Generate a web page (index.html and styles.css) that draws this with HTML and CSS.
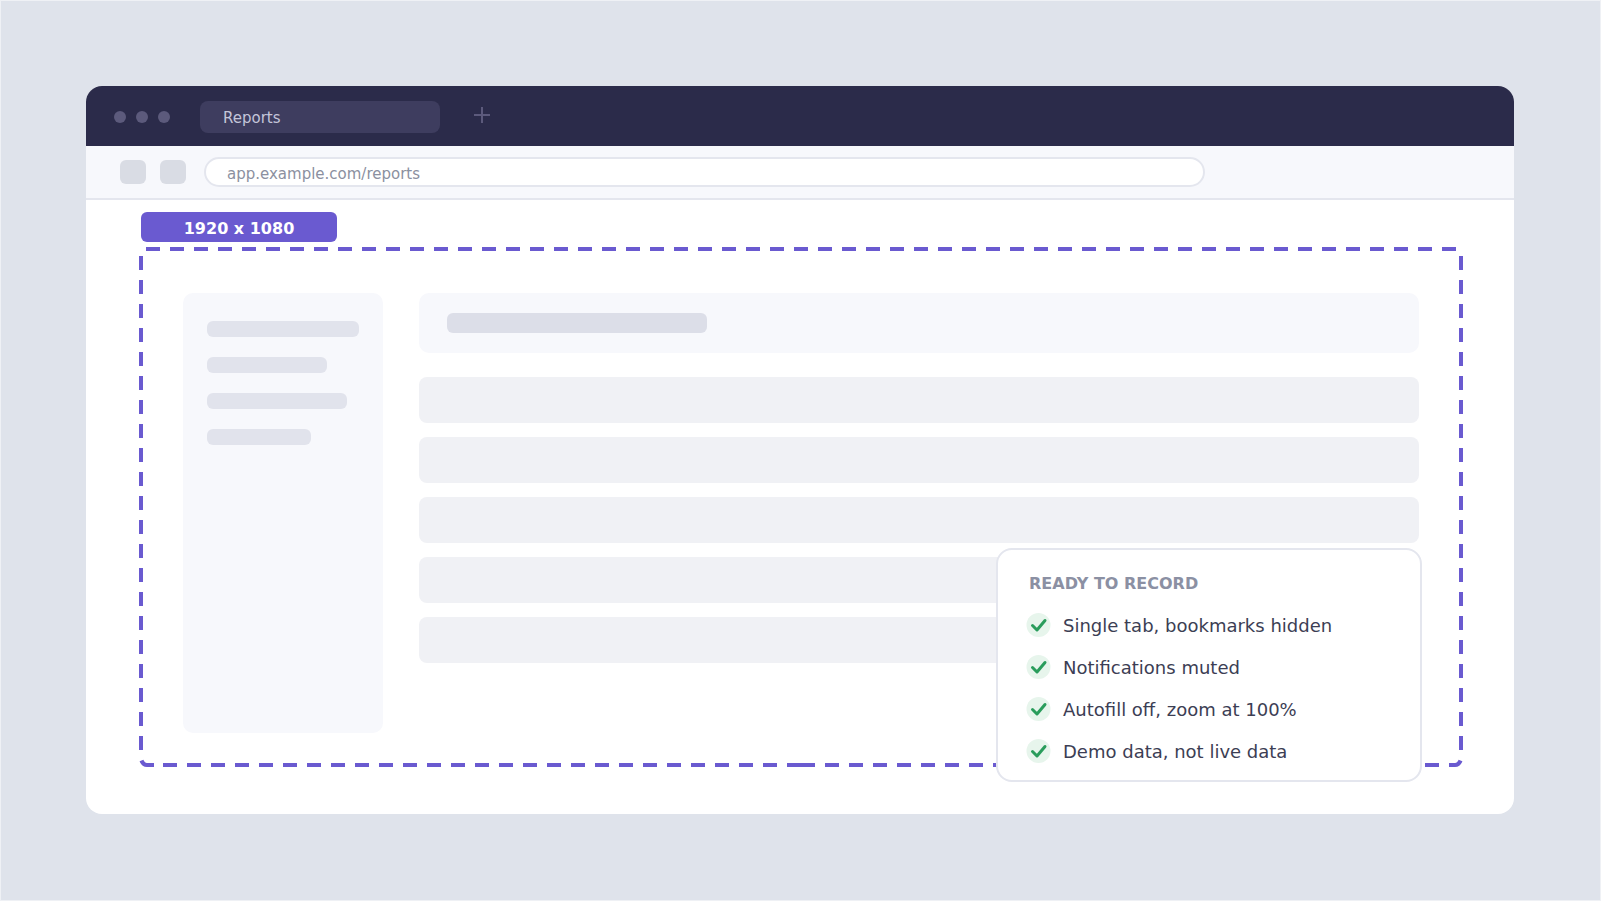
FILE: index.html
```html
<!DOCTYPE html>
<html lang="en">
<head>
<meta charset="utf-8">
<title>Reports</title>
<link rel="stylesheet" href="styles.css">
</head>
<body>
<main class="window">
  <header class="tabbar">
    <div class="dots"><i class="dot"></i><i class="dot"></i><i class="dot"></i></div>
    <button class="tab" type="button">Reports</button>
    <button class="new-tab" type="button" aria-label="New tab">
      <svg width="18" height="18" viewBox="0 0 18 18"><path d="M1 9H17M9 1V17" fill="none" stroke="currentColor" stroke-width="2"/></svg>
    </button>
  </header>
  <div class="toolbar">
    <button class="tool" type="button" aria-label="Back"></button>
    <button class="tool" type="button" aria-label="Forward"></button>
    <input class="address" type="text" aria-label="Address" value="app.example.com/reports">
  </div>
  <section class="page">
    <div class="badge">1920 x 1080</div>
    <div class="frame">
      <svg class="outline" aria-hidden="true">
        <g fill="none" stroke="currentColor" stroke-width="4" stroke-dasharray="14 10">
          <line x1="7" y1="2" x2="100%" y2="2"/>
          <line x1="2" y1="9" x2="2" y2="97%"/>
        </g>
        <svg x="100%" overflow="visible">
          <line x1="-2" y1="9" x2="-2" y2="97%" stroke="currentColor" stroke-width="4" stroke-dasharray="14 10"/>
        </svg>
        <svg y="100%" overflow="visible">
          <g fill="none" stroke="currentColor" stroke-width="4">
            <line x1="24" y1="-2" x2="50%" y2="-2" stroke-dasharray="14 10"/>
            <line x1="50%" y1="-2" x2="98.5%" y2="-2" stroke-dasharray="14 10"/>
            <path d="M2.500 -6.500Q4 -2 8 -2H15"/>
          </g>
        </svg>
        <svg x="100%" y="100%" overflow="visible">
          <path d="M-14 -2H-8Q-4 -2 -2.500 -6.500" fill="none" stroke="currentColor" stroke-width="4"/>
        </svg>
      </svg>
      <aside class="side">
        <div class="line line-a"></div>
        <div class="line line-b"></div>
        <div class="line line-c"></div>
        <div class="line line-d"></div>
      </aside>
      <div class="content">
        <div class="heading"><div class="heading-bar"></div></div>
        <div class="rows">
          <div class="row"></div>
          <div class="row"></div>
          <div class="row"></div>
          <div class="row"></div>
          <div class="row"></div>
        </div>
      </div>
      <section class="card">
        <h2 class="card-title">READY TO RECORD</h2>
        <ul class="checks">
          <li class="check"><svg class="tick" viewBox="0 0 24 24"><circle cx="12.500" cy="12" r="12"/><path d="M6.500 12.500L11 17L19 7.500"/></svg>Single tab, bookmarks hidden</li>
          <li class="check"><svg class="tick" viewBox="0 0 24 24"><circle cx="12.500" cy="12" r="12"/><path d="M6.500 12.500L11 17L19 7.500"/></svg>Notifications muted</li>
          <li class="check"><svg class="tick" viewBox="0 0 24 24"><circle cx="12.500" cy="12" r="12"/><path d="M6.500 12.500L11 17L19 7.500"/></svg>Autofill off, zoom at 100%</li>
          <li class="check"><svg class="tick" viewBox="0 0 24 24"><circle cx="12.500" cy="12" r="12"/><path d="M6.500 12.500L11 17L19 7.500"/></svg>Demo data, not live data</li>
        </ul>
      </section>
    </div>
  </section>
</main>
</body>
</html>
```
FILE: styles.css
```css
* { box-sizing: border-box; }
body {
  margin: 0;
  min-height: 100vh;
  display: flex;
  padding: 85px 86px 86px 85px;
  border: 1px solid #eff1f5;
  background: #dfe3eb;
  font-family: "DejaVu Sans", sans-serif;
}
button, input { font: inherit; border: 0; margin: 0; padding: 0; }
.window {
  flex: 1;
  display: flex;
  flex-direction: column;
  border-radius: 16px;
  overflow: hidden;
  background: #fff;
}
.tabbar {
  display: flex;
  align-items: center;
  height: 60px;
  padding: 1px 0 0 28px;
  background: #2b2b4a;
}
.dots { display: flex; gap: 10px; margin-right: 30px; }
.dot { width: 12px; height: 12px; border-radius: 50%; background: #5c5a7c; }
.tab {
  width: 240px;
  height: 32px;
  padding: 2px 0 0 23px;
  border-radius: 8px;
  background: #3e3d5f;
  color: #c4c5d9;
  font-size: 15px;
  line-height: 30px;
  text-align: left;
}
.new-tab {
  display: flex;
  height: 22px;
  margin-left: 33px;
  background: none;
  color: #5c5a7c;
}
.toolbar {
  display: flex;
  align-items: center;
  gap: 14px;
  height: 54px;
  padding: 0 309px 0 34px;
  border-bottom: 2px solid #e4e6ee;
  background: #f7f8fc;
}
.tool { width: 26px; height: 24px; border-radius: 6px; background: #d9dce4; }
.address {
  flex: 1;
  min-width: 0;
  height: 30px;
  margin-left: 4px;
  padding: 3px 21px 0;
  border: 2px solid #e4e6ee;
  border-radius: 15px;
  background: #fff;
  color: #8b90a0;
  font-size: 15px;
}
.page {
  flex: 1;
  display: flex;
  flex-direction: column;
  gap: 5px;
  padding: 12px 51px 47px 53px;
}
.badge {
  width: 196px;
  margin-left: 2px;
  padding-top: 4px;
  border-radius: 6px;
  background: #6a5ad0;
  color: #fff;
  font-size: 16px;
  font-weight: bold;
  line-height: 26px;
  text-align: center;
}
.frame {
  position: relative;
  flex: 1;
  display: flex;
  gap: 36px;
  padding: 46px 44px 34px 44px;
}
.outline { position: absolute; inset: 0; width: 100%; height: 100%; color: #6a5ad0; }
.side {
  display: flex;
  flex-direction: column;
  gap: 20px;
  width: 200px;
  padding: 28px 24px;
  border-radius: 10px;
  background: #f7f8fc;
}
.line { height: 16px; border-radius: 6px; background: #e1e3ec; }
.line-a { width: 152px; }
.line-b { width: 120px; }
.line-c { width: 140px; }
.line-d { width: 104px; }
.content { flex: 1; display: flex; flex-direction: column; gap: 24px; }
.heading { padding: 20px 28px; border-radius: 10px; background: #f7f8fc; }
.heading-bar { width: 260px; height: 20px; border-radius: 6px; background: #dcdee8; }
.rows { display: flex; flex-direction: column; gap: 14px; }
.row { height: 46px; border-radius: 8px; background: #f0f1f5; }
.card {
  position: absolute;
  right: 41px;
  bottom: -15px;
  width: 426px;
  padding: 22px 28px 15px;
  border: 2px solid #e4e6ee;
  border-radius: 16px;
  background: #fff;
}
.card-title {
  margin: 0 0 17px 3px;
  color: #8b90a3;
  font-size: 16px;
  line-height: 24px;
}
.checks {
  display: flex;
  flex-direction: column;
  gap: 16px;
  margin: 0;
  padding: 0;
  list-style: none;
}
.check {
  display: flex;
  align-items: center;
  gap: 13px;
  color: #3c3e54;
  font-size: 18px;
  line-height: 26px;
}
.tick { width: 24px; height: 24px; margin-bottom: 2px; overflow: visible; }
.tick circle { fill: #e7f5ec; }
.tick path {
  fill: none;
  stroke: #2a9d5c;
  stroke-width: 3;
  stroke-linecap: round;
  stroke-linejoin: round;
}
```
